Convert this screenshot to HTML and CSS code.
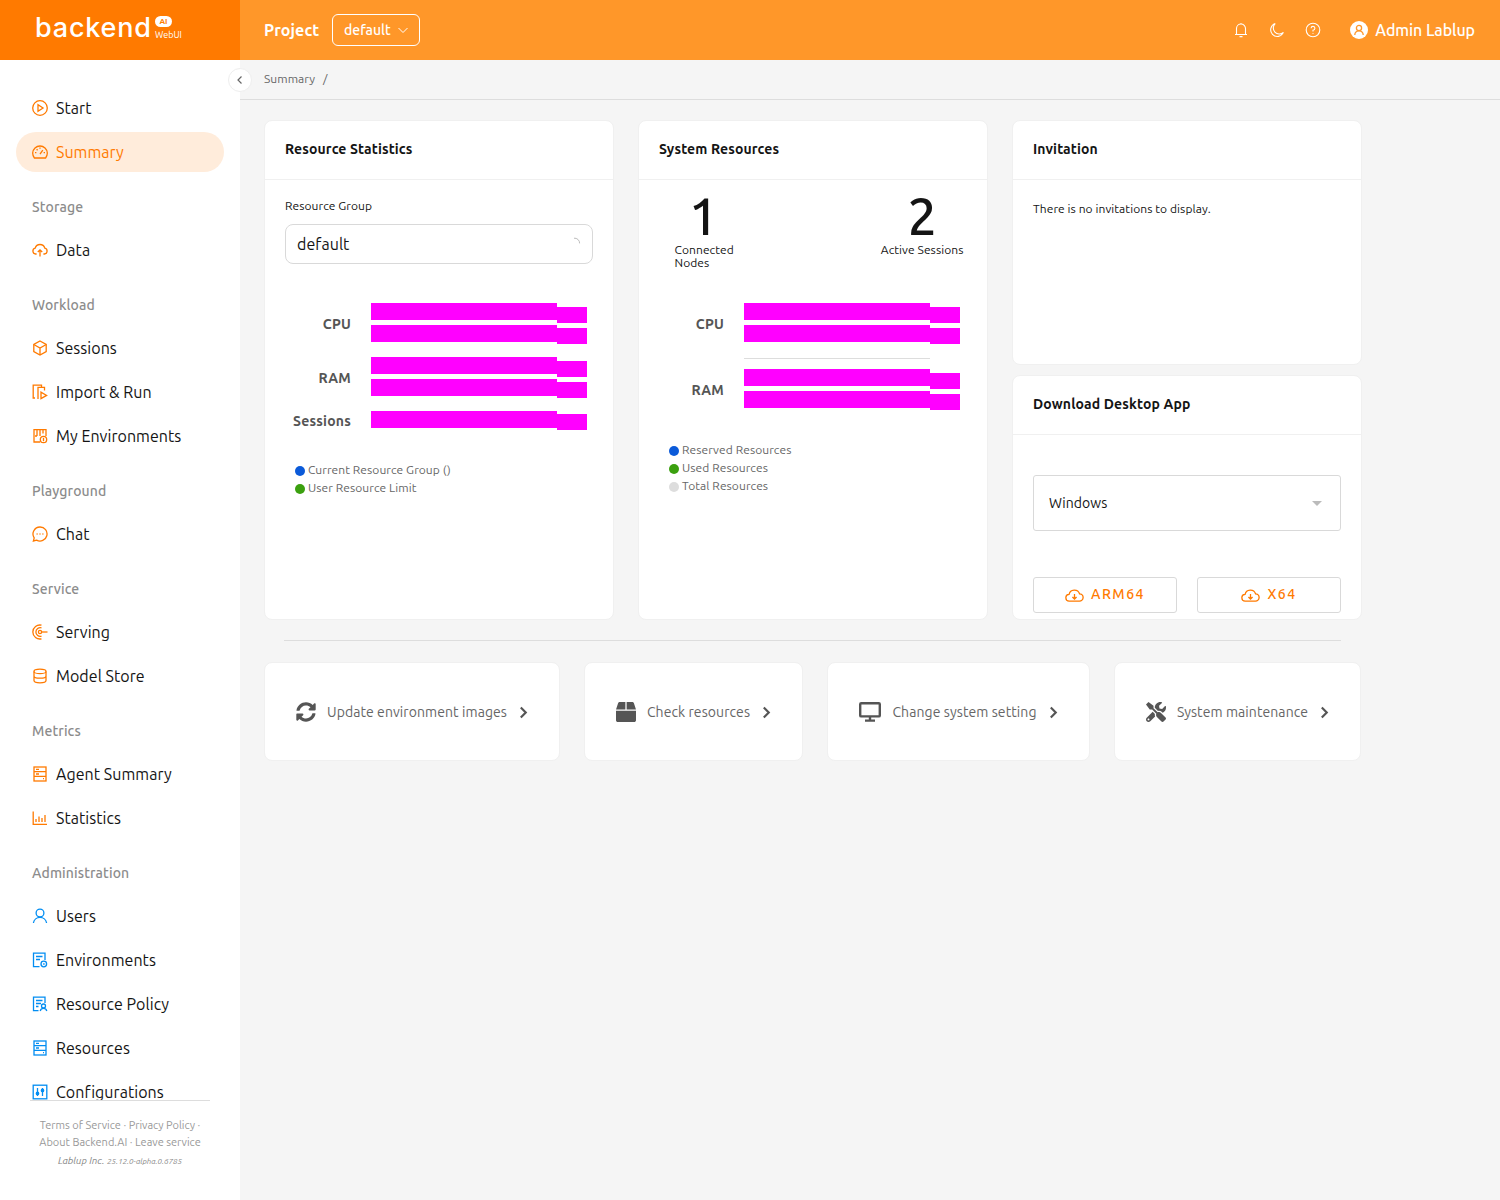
FILE: index.html
```html
<!DOCTYPE html>
<html lang="en">
<head>
<meta charset="utf-8">
<title>Backend.AI WebUI</title>
<link rel="stylesheet" href="styles.css">
</head>
<body>
<div class="app">
  <aside class="sidebar">
    <div class="logo">
      <span class="logo-word">backend</span>
      <span class="logo-side"><span class="logo-ai">AI</span><span class="logo-webui">WebUI</span></span>
    </div>
    <nav class="nav">
      <div class="group">
        <a class="item"><svg class="ic" viewBox="0 0 16 16"><circle cx="8" cy="8" r="7.3"/><path d="M6 4.8v6.4L11 8z"/></svg>Start</a>
        <a class="item active"><svg class="ic" viewBox="0 0 16 16"><path d="M2.4 14A7.3 7.3 0 1 1 13.6 14z"/><path d="M8 10.2 10.8 6.2M3 8.6h1.4M11.6 8.6H13M8 3.4v1.4M4.6 5.2l1 1"/></svg>Summary</a>
      </div>
      <div class="group">
        <div class="title">Storage</div>
        <a class="item"><svg class="ic" viewBox="0 0 16 16"><path d="M4.6 12H3.6A3 3 0 0 1 3.2 6.1 5 5 0 0 1 12.8 6.1 3 3 0 0 1 12.4 12H11.4"/><path d="M8 14.5V8M5.8 10 8 7.8 10.2 10"/></svg>Data</a>
      </div>
      <div class="group">
        <div class="title">Workload</div>
        <a class="item"><svg class="ic" viewBox="0 0 16 16"><path d="M8 1 14.2 4.5V11.5L8 15 1.8 11.5V4.5z"/><path d="M1.8 4.5 8 8 14.2 4.5M8 8V15"/></svg>Sessions</a>
        <a class="item"><svg class="ic" viewBox="0 0 16 16"><path d="M3 14H1.2V1.2H9.5V3"/><path d="M6 15V3.4H12.5V6.5"/><path d="M9 8.2V14.6L14.6 11.4z"/></svg>Import &amp; Run</a>
        <a class="item"><svg class="ic" viewBox="0 0 16 16"><path d="M8 14H2V1.6H14V8"/><path d="M5 1.6V8M8 1.6V8M11 1.6V5.5M5 8H3"/><circle cx="11.5" cy="11.5" r="3.2"/><path d="M11.5 9.8v3.4"/></svg>My Environments</a>
      </div>
      <div class="group">
        <div class="title">Playground</div>
        <a class="item"><svg class="ic" viewBox="0 0 16 16"><path d="M8 1a7 7 0 1 1-3.4 13.1L1.4 15l.8-3.1A7 7 0 0 1 8 1z"/><path d="M4.6 8h1M7.5 8h1M10.4 8h1"/></svg>Chat</a>
      </div>
      <div class="group">
        <div class="title">Service</div>
        <a class="item"><svg class="ic" viewBox="0 0 16 16"><path d="M9.5 1.2A7 7 0 1 0 9.5 14.8"/><path d="M9.5 3.9A4.3 4.3 0 1 0 9.5 12.1"/><circle cx="8" cy="8" r="1.6"/><path d="M9.6 8H15.5"/></svg>Serving</a>
        <a class="item"><svg class="ic" viewBox="0 0 16 16"><ellipse cx="8" cy="3.4" rx="6" ry="2.2"/><path d="M2 3.4V12.6C2 13.8 4.7 14.8 8 14.8S14 13.8 14 12.6V3.4M2 8C2 9.2 4.7 10.2 8 10.2S14 9.2 14 8"/></svg>Model Store</a>
      </div>
      <div class="group">
        <div class="title">Metrics</div>
        <a class="item"><svg class="ic" viewBox="0 0 16 16"><rect x="2" y="1" width="12" height="14"/><path d="M2 5.6H14M2 10.4H14M4 3.4H7M4 8H7M11 12.7H12"/></svg>Agent Summary</a>
        <a class="item"><svg class="ic" viewBox="0 0 16 16"><path d="M1.2 1.5V14.4H15"/><path d="M4 12V9M7 12V6.5M10 12V8M13 12V5"/></svg>Statistics</a>
      </div>
      <div class="group">
        <div class="title">Administration</div>
        <a class="item blue"><svg class="ic" viewBox="0 0 16 16"><circle cx="8" cy="5" r="3.9"/><path d="M1.4 15A6.7 6.7 0 0 1 14.6 15"/></svg>Users</a>
        <a class="item blue"><svg class="ic" viewBox="0 0 16 16"><path d="M7.5 14.6H1.5V1.2H13V8"/><path d="M4 4.5H10.5M4 7.5H8"/><circle cx="11.8" cy="12" r="2.8"/><path d="M11.8 11.2V12H12.6"/></svg>Environments</a>
        <a class="item blue"><svg class="ic" viewBox="0 0 16 16"><path d="M6.5 14.6H1.5V1.2H13V7"/><path d="M4 4.5H10.5M4 7.5H9M4 10.5H6.5"/><circle cx="11.5" cy="10" r="2"/><path d="M8.2 15A3.4 3.4 0 0 1 14.8 15"/></svg>Resource Policy</a>
        <a class="item blue"><svg class="ic" viewBox="0 0 16 16"><rect x="2" y="1" width="12" height="14"/><path d="M2 5.6H14M2 10.4H14M4 3.4H7M4 8H7M11 12.7H12"/></svg>Resources</a>
        <a class="item blue"><svg class="ic" viewBox="0 0 16 16"><rect x="1.2" y="1.2" width="13.6" height="13.6"/><path d="M5.5 4V12M10.5 4V12"/><circle cx="5.5" cy="9.4" r="1.2"/><circle cx="10.5" cy="6.4" r="1.2"/></svg>Configurations</a>
      </div>
    </nav>
    <footer class="foot">
      <div class="foot-line">Terms of Service · Privacy Policy ·</div>
      <div class="foot-line">About Backend.AI · Leave service</div>
      <div class="foot-inc"><i>Lablup Inc.</i> <i class="foot-ver">25.12.0-alpha.0.6785</i></div>
    </footer>
  </aside>

  <button class="collapse" type="button"><svg viewBox="0 0 10 10"><path d="M6.5 1.5 3 5l3.5 3.5"/></svg></button>

  <main class="main">
    <header class="top">
      <span class="project">Project</span>
      <span class="proj-select">default<svg viewBox="0 0 12 12"><path d="M1.5 4 6 8.5 10.5 4"/></svg></span>
      <div class="top-right">
        <svg class="top-ic" viewBox="0 0 16 16"><path d="M3.5 12.5V6.5A4.5 4.5 0 0 1 12.5 6.5V12.5M2 12.5H14M6.5 14.6H9.5M8 1V2"/></svg>
        <svg class="top-ic" viewBox="0 0 16 16"><path d="M6.2 1.6A6.6 6.6 0 1 0 14.4 10.4 6 6 0 0 1 6.2 1.6z"/></svg>
        <svg class="top-ic" viewBox="0 0 16 16"><circle cx="8" cy="8" r="6.8"/><path d="M6.1 6.2A1.9 1.9 0 1 1 8 8.2V9.4M8 11.1V11.8"/></svg>
        <span class="avatar"><svg viewBox="0 0 18 18"><circle cx="9" cy="7" r="2.6"/><path d="M4.8 14A4.2 4.2 0 0 1 13.2 14"/></svg></span>
        <span class="user">Admin Lablup</span>
      </div>
    </header>
    <div class="crumb">Summary<span class="crumb-sep">/</span></div>

    <div class="content">
      <div class="cards">
        <section class="card">
          <h2 class="card-head">Resource Statistics</h2>
          <div class="rs-label">Resource Group</div>
          <div class="rs-select">default<svg class="spin" viewBox="0 0 10 10"><path d="M2 1.2A5 5 0 0 1 7.6 6.4"/></svg></div>
          <div class="chart chart-a">
            <div class="row">
              <div class="label">CPU</div>
              <div class="bars">
                <div class="bar"><i class="seg-l"></i><i class="seg-r"></i></div>
                <div class="bar"><i class="seg-l"></i><i class="seg-r alt"></i></div>
              </div>
            </div>
            <div class="row">
              <div class="label">RAM</div>
              <div class="bars">
                <div class="bar"><i class="seg-l"></i><i class="seg-r"></i></div>
                <div class="bar"><i class="seg-l"></i><i class="seg-r alt"></i></div>
              </div>
            </div>
            <div class="row">
              <div class="label">Sessions</div>
              <div class="bars">
                <div class="bar"><i class="seg-l"></i><i class="seg-r alt"></i></div>
              </div>
            </div>
          </div>
          <ul class="legend">
            <li><i class="dot d-blue"></i>Current Resource Group ()</li>
            <li><i class="dot d-green"></i>User Resource Limit</li>
          </ul>
        </section>

        <section class="card">
          <h2 class="card-head">System Resources</h2>
          <div class="stats">
            <div class="stat stat-nodes"><div class="num">1</div><div class="cap">Connected Nodes</div></div>
            <div class="stat"><div class="num">2</div><div class="cap">Active Sessions</div></div>
          </div>
          <div class="chart chart-b">
            <div class="row">
              <div class="label">CPU</div>
              <div class="bars">
                <div class="bar"><i class="seg-l"></i><i class="seg-r"></i></div>
                <div class="bar"><i class="seg-l"></i><i class="seg-r alt"></i></div>
              </div>
            </div>
            <div class="rule"></div>
            <div class="row">
              <div class="label">RAM</div>
              <div class="bars">
                <div class="bar"><i class="seg-l"></i><i class="seg-r"></i></div>
                <div class="bar"><i class="seg-l"></i><i class="seg-r alt"></i></div>
              </div>
            </div>
          </div>
          <ul class="legend">
            <li><i class="dot d-blue"></i>Reserved Resources</li>
            <li><i class="dot d-green"></i>Used Resources</li>
            <li><i class="dot d-grey"></i>Total Resources</li>
          </ul>
        </section>

        <div class="stack">
          <section class="card card-half">
            <h2 class="card-head">Invitation</h2>
            <p class="invite">There is no invitations to display.</p>
          </section>
          <section class="card card-half">
            <h2 class="card-head">Download Desktop App</h2>
            <div class="dl">
              <div class="dl-select">Windows<i class="caret"></i></div>
              <div class="dl-btns">
                <a class="dl-btn"><svg viewBox="0 0 20 16"><path d="M5.2 14H4.6A3.6 3.6 0 0 1 4.2 6.8 5.8 5.8 0 0 1 15.4 6.2 3.9 3.9 0 0 1 15.2 14z"/><path d="M10 6.5V11.5M7.8 9.6 10 11.8 12.2 9.6"/></svg>ARM64</a>
                <a class="dl-btn"><svg viewBox="0 0 20 16"><path d="M5.2 14H4.6A3.6 3.6 0 0 1 4.2 6.8 5.8 5.8 0 0 1 15.4 6.2 3.9 3.9 0 0 1 15.2 14z"/><path d="M10 6.5V11.5M7.8 9.6 10 11.8 12.2 9.6"/></svg>X64</a>
              </div>
            </div>
          </section>
        </div>
      </div>

      <div class="divider"></div>

      <div class="actions">
        <a class="action a1"><svg class="act-ic" viewBox="0 0 512 512"><path d="M370.72 133.28C339.458 104.008 298.888 87.962 255.848 88c-77.458.068-144.328 53.178-162.791 126.85-1.344 5.363-6.122 9.15-11.651 9.15H24.103c-7.498 0-13.194-6.807-11.807-14.176C33.933 94.924 134.813 8 256 8c66.448 0 126.791 26.136 171.315 68.685L463.03 40.97C478.149 25.851 504 36.559 504 57.941V192c0 13.255-10.745 24-24 24H345.941c-21.382 0-32.09-25.851-16.971-40.971l41.75-41.749zM32 296h134.059c21.382 0 32.09 25.851 16.971 40.971l-41.75 41.75c31.262 29.273 71.835 45.319 114.876 45.28 77.418-.07 144.315-53.144 162.787-126.849 1.344-5.363 6.122-9.15 11.651-9.15h57.304c7.498 0 13.194 6.807 11.807 14.176C478.067 417.076 377.187 504 256 504c-66.448 0-126.791-26.136-171.315-68.685L48.97 471.03C33.851 486.149 8 475.441 8 454.059V320c0-13.255 10.745-24 24-24z"/></svg><span>Update environment images</span><svg class="chev" viewBox="0 0 10 14"><path d="M2 1.5 7.5 7 2 12.5"/></svg></a>
        <a class="action a2"><svg class="act-ic" viewBox="0 0 512 512"><path d="M509.5 184.6L458.9 32.8C452.4 13.2 434.1 0 413.4 0H272v192h238.7c-.4-2.5-.4-5-1.2-7.4zM240 0H98.6c-20.7 0-39 13.2-45.5 32.8L2.5 184.6c-.8 2.4-.8 4.9-1.2 7.4H240V0zM0 224v240c0 26.5 21.5 48 48 48h416c26.5 0 48-21.5 48-48V224H0z"/></svg><span>Check resources</span><svg class="chev" viewBox="0 0 10 14"><path d="M2 1.5 7.5 7 2 12.5"/></svg></a>
        <a class="action a3"><svg class="act-ic act-screen" viewBox="0 0 22 20"><rect x="1.2" y="1.2" width="19.6" height="13.2" rx="1"/><path d="M11 15v3M6 18.6H16"/></svg><span>Change system setting</span><svg class="chev" viewBox="0 0 10 14"><path d="M2 1.5 7.5 7 2 12.5"/></svg></a>
        <a class="action a4"><svg class="act-ic" viewBox="0 0 512 512"><path d="M501.1 395.7L384 278.6c-23.1-23.1-57.6-27.6-85.4-13.9L192 158.1V96L64 0 0 64l96 128h62.1l106.6 106.6c-13.6 27.8-9.2 62.3 13.9 85.4l117.1 117.1c14.6 14.6 38.2 14.6 52.7 0l52.7-52.7c14.5-14.6 14.5-38.2 0-52.7zM331.7 225c28.3 0 54.9 11 74.9 31l19.4 19.4c15.8-6.9 30.8-16.5 43.8-29.5 37.1-37.1 49.7-89.3 37.9-136.7-2.2-9-13.5-12.1-20.1-5.5l-74.4 74.4-67.9-11.3L334 98.9l74.4-74.4c6.6-6.6 3.4-17.9-5.7-20.2-47.4-11.7-99.6.9-136.6 37.9-28.5 28.5-41.9 66.1-41.2 103.6l82.1 82.1c8.1-1.9 16.5-2.9 24.7-2.9zm-103.9 82l-56.7-56.7L18.7 402.8c-25 25-25 65.5 0 90.5s65.5 25 90.5 0l123.6-123.6c-7.6-19.9-9.9-41.6-5-62.7zM64 472c-13.2 0-24-10.8-24-24 0-13.3 10.7-24 24-24s24 10.7 24 24c0 13.2-10.7 24-24 24z"/></svg><span>System maintenance</span><svg class="chev" viewBox="0 0 10 14"><path d="M2 1.5 7.5 7 2 12.5"/></svg></a>
      </div>
    </div>
  </main>
</div>
</body>
</html>
```
FILE: styles.css
```css
* { box-sizing: border-box; }
html, body { margin: 0; height: 100%; }
body {
  font-family: "Ubuntu", "Noto Sans", "Open Sans", sans-serif;
  color: #141414;
  background: #f5f5f5;
  overflow: hidden;
}
.app { position: relative; display: flex; height: 1200px; }

/* sidebar */
.sidebar { width: 240px; flex: none; display: flex; flex-direction: column; background: #fff; }
.logo { height: 60px; flex: none; background: #ff7a00; color: #fff; display: flex; align-items: flex-start; padding: 13px 0 0 35px; }
.logo-word { font-family: "Inter", sans-serif; font-size: 27px; font-weight: 500; line-height: 30px; letter-spacing: .8px; width: 115px; white-space: nowrap; }
.logo-side { display: flex; flex-direction: column; margin-left: 5px; padding-top: 3px; align-items: flex-start; }
.logo-ai { width: 17px; height: 11px; border-radius: 6px; background: #fff; color: #ff7a00; font-size: 8px; line-height: 11px; text-align: center; font-weight: 700; }
.logo-webui { font-size: 9px; line-height: 12px; margin-top: 2px; }
.nav { flex: 1; min-height: 0; overflow: hidden; padding-top: 28px; display: flex; flex-direction: column; gap: 4px; }
.group { display: flex; flex-direction: column; gap: 4px; }
.title { font-size: 14px; line-height: 22px; padding: 20px 0 8px 32px; color: #8c8c8c; font-weight: 500; letter-spacing: .12px; }
.item { display: flex; align-items: center; gap: 8px; height: 40px; flex: none; margin: 0 16px; padding-left: 16px; border-radius: 20px; font-size: 16px; letter-spacing: .05px; color: #141414; }
.item .ic { color: #ff7a00; }
.item.blue .ic { color: #028df2; }
.item.active { background: #ffecdb; color: #ff7a00; }
.ic { width: 16px; height: 16px; flex: none; fill: none; stroke: currentColor; stroke-width: 1.3; }
.foot { height: 100px; flex: none; margin: 0 30px; border-top: 1px solid #ddd; padding-top: 16px; text-align: center; color: #999; font-size: 11px; white-space: nowrap; display: flex; flex-direction: column; align-items: center; }
.foot-line { line-height: 17px; }
.foot-inc { line-height: 20px; font-size: 10px; color: #888; }
.foot-ver { font-size: 8px; }
.collapse { position: absolute; left: 228px; top: 68px; width: 24px; height: 24px; padding: 0; border: 1px solid #eee; border-radius: 50%; background: #fff; display: flex; align-items: center; justify-content: center; }
.collapse svg { width: 10px; height: 10px; fill: none; stroke: #666; stroke-width: 1.2; }

/* main */
.main { flex: 1; min-width: 0; display: flex; flex-direction: column; }
.top { height: 60px; flex: none; background: #ff9729; color: #fff; display: flex; align-items: center; padding: 0 25px 0 24px; }
.project { font-size: 16px; font-weight: 700; width: 56px; white-space: nowrap; letter-spacing: .1px; }
.proj-select { margin-left: 12px; width: 88px; height: 32px; border: 1px solid #fff; border-radius: 6px; display: flex; align-items: center; justify-content: space-between; padding: 0 10px 0 11px; font-size: 14px; font-weight: 500; }
.proj-select svg { width: 12px; height: 12px; fill: none; stroke: #fff; stroke-width: 1; }
.top-right { margin-left: auto; display: flex; align-items: center; gap: 20px; }
.top-ic { width: 16px; height: 16px; fill: none; stroke: #fff; stroke-width: 1.1; }
.avatar { width: 18px; height: 18px; border-radius: 50%; background: #fff; margin-left: 9px; display: flex; }
.avatar svg { width: 18px; height: 18px; fill: none; stroke: #ff9729; stroke-width: 1.3; }
.user { font-size: 16px; font-weight: 500; margin-left: -13px; white-space: nowrap; letter-spacing: -.08px; }
.crumb { height: 40px; flex: none; border-bottom: 1px solid #ddd; padding: 0 0 2px 24px; display: flex; align-items: center; font-size: 12px; color: #666; letter-spacing: .05px; }
.crumb-sep { margin-left: 8px; }
.content { padding: 20px 138px 0 24px; }
.cards { display: flex; gap: 24px; height: 500px; }
.card { width: 350px; background: #fff; border: 1px solid #f0f0f0; border-radius: 8px; overflow: hidden; }
.card-head { margin: 0; height: 59px; line-height: 56px; padding-left: 20px; font-size: 14px; font-weight: 700; letter-spacing: .13px; border-bottom: 1px solid #f0f0f0; color: #141414; }
.stack { width: 350px; display: flex; flex-direction: column; gap: 10px; }
.card-half { height: 245px; }
.rs-label { margin: 16px 20px 0; font-size: 12px; line-height: 20px; letter-spacing: .08px; }
.rs-select { margin: 8px 20px 0; height: 40px; border: 1px solid #d9d9d9; border-radius: 8px; padding: 0 11px; display: flex; align-items: center; justify-content: space-between; font-size: 16px; letter-spacing: .05px; }
.spin { width: 10px; height: 10px; fill: none; stroke: #bbb; stroke-width: 1; margin: -4px -1px 0 0; }

.chart { display: flex; flex-direction: column; }
.chart-a { margin: 39px 0 0 6px; gap: 15px; }
.chart-b { margin: 34px 0 0 5px; }
.row { display: flex; align-items: center; gap: 20px; }
.label { width: 80px; height: 17px; line-height: 20px; flex: none; text-align: right; font-size: 14px; font-weight: 700; letter-spacing: .2px; color: #555; }
.bars { display: flex; flex-direction: column; gap: 5px; }
.bar { display: flex; align-items: flex-start; height: 17px; }
.seg-l { width: 186px; height: 17px; background: #f0f; }
.seg-r { width: 30px; height: 16px; margin-top: 4px; background: #f0f; }
.seg-r.alt { margin-top: 3px; }
.rule { width: 186px; height: 1px; background: #ddd; margin: 16px 0 10px 100px; }
.legend { list-style: none; margin: 33px 0 0 30px; padding: 0; font-size: 12px; line-height: 18px; color: #666; letter-spacing: .08px; }
.legend li { display: flex; align-items: center; gap: 3px; }
.dot { width: 10px; height: 10px; border-radius: 50%; margin-top: 2px; }
.d-blue { background: #0b5ad9; }
.d-green { background: #3ba00f; }
.d-grey { background: #ddd; }
.stats { display: flex; justify-content: space-between; padding: 9px 23.5px 0 35.5px; }
.stat { text-align: left; }
.stat-nodes { width: 58px; }
.num { font-size: 52px; line-height: 54px; text-align: center; font-weight: 500; }
.cap { font-size: 12px; line-height: 13px; letter-spacing: .08px; }
.invite { margin: 0; padding: 20px 20px 0; font-size: 12px; line-height: 18px; letter-spacing: .08px; }
.dl { padding: 40px 20px 0; }
.dl-select { height: 56px; border: 1px solid #d9d9d9; border-radius: 3px; padding: 0 18px 0 15px; display: flex; align-items: center; justify-content: space-between; font-size: 14px; letter-spacing: .05px; }
.caret { width: 0; height: 0; border: 5px solid transparent; border-top: 5px solid #bbb; border-bottom: 0; }
.dl-btns { display: flex; gap: 20px; margin-top: 46px; }
.dl-btn { flex: 1; height: 36px; padding-bottom: 3px; border: 1px solid #d9d9d9; border-radius: 3px; display: flex; align-items: center; justify-content: center; gap: 7px; color: #ff7a00; font-size: 14px; font-weight: 500; letter-spacing: 1.5px; }
.dl-btn svg { width: 19px; height: 15px; margin-top: 3px; fill: none; stroke: #ff7a00; stroke-width: 1.4; }
.divider { width: 1057px; height: 1px; background: #ddd; margin: 20px 0 0 20px; }
.actions { display: grid; grid-template-columns: 296px 219px 263px 247px; gap: 24px; margin-top: 21px; }
.action { height: 99px; background: #fff; border: 1px solid #f0f0f0; border-radius: 8px; display: flex; align-items: center; justify-content: center; gap: 11px; font-size: 14px; letter-spacing: .08px; color: #666; white-space: nowrap; }
.act-ic { width: 20px; height: 20px; fill: #555; flex: none; }
.act-screen { width: 22px; fill: none; stroke: #555; stroke-width: 2.4; }
.chev { width: 9px; height: 13px; margin: 1px 0 0 1px; fill: none; stroke: #555; stroke-width: 2.4; flex: none; }
```
